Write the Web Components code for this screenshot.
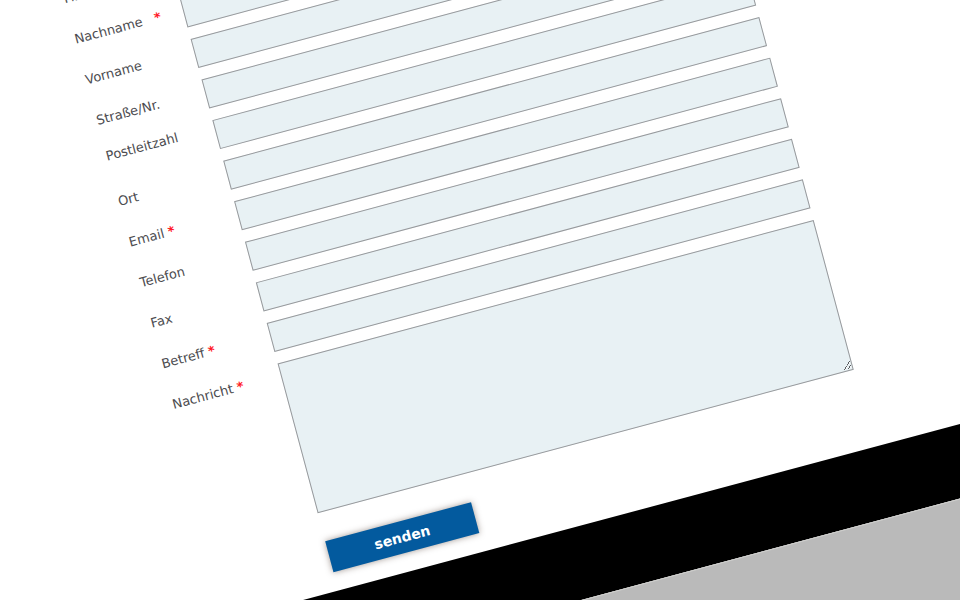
<!DOCTYPE html>
<html lang="de">
<head>
    <meta charset="UTF-8">
    <meta name="viewport" content="width=device-width, initial-scale=1.0">
    <title>Kontakt</title>
    <style>
        body {
            margin: 0;
            background: white;
            color: #4c4c50;
            font-family: Verdana, "DejaVu Sans", sans-serif;
            font-size: 13px;
        }
    </style>
</head>
<body>
    <tilted-screen>
        <contact-form></contact-form>
    </tilted-screen>

    <script>
        class TiltedScreen extends HTMLElement {

            constructor() {
                super();
                this.attachShadow({ mode: "open" });
                this.shadowRoot.innerHTML = /*html*/ `
                    <style>
                        :host {
                            display: block;
                            height: 100vh;
                            overflow: hidden;
                        }
                        .device {
                            width: 120%;
                            transform: rotate(-15deg);
                            transform-origin: 0 0;
                        }
                        .screen {
                            padding: 3px 0 19px 62px;
                            background: white;
                        }
                        .bezel {
                            height: 72px;
                            background: black;
                        }
                        .stand {
                            height: 100vh;
                            border-top: 1px solid #cfcfcd;
                            background: #bababa;
                        }
                    </style>
                    <div class="device">
                        <div class="screen"><slot></slot></div>
                        <div class="bezel"></div>
                        <div class="stand"></div>
                    </div>
                `;
            }
        }

        class FormRow extends HTMLElement {

            constructor() {
                super();
                this.attachShadow({ mode: "open" });
            }

            connectedCallback() {
                const name = this.getAttribute("name");
                const required = this.hasAttribute("required") ? "required" : "";
                const control = this.hasAttribute("multiline")
                    ? `<textarea id="control" name="${name}" ${required}></textarea>`
                    : `<input id="control" type="${this.getAttribute("type") || "text"}" name="${name}" ${required}>`;

                this.shadowRoot.innerHTML = /*html*/ `
                    <style>
                        :host {
                            display: grid;
                            grid-template-columns: 112px 1fr;
                            align-items: start;
                        }
                        label {
                            line-height: 26px;
                            white-space: pre;
                        }
                        :host([compact]) label {
                            line-height: 16px;
                        }
                        .mark {
                            color: #ff1a28;
                            font-weight: bold;
                        }
                        input, textarea {
                            display: block;
                            box-sizing: border-box;
                            width: 100%;
                            height: 30px;
                            margin: 0;
                            padding: 4px 8px;
                            border: 1px solid #97999c;
                            border-radius: 0;
                            outline: none;
                            background: #e8f1f4;
                            color: inherit;
                            font: inherit;
                        }
                        textarea {
                            height: 155px;
                            resize: both;
                        }
                    </style>
                    <label for="control"><slot></slot>${required ? ' <span class="mark">*</span>' : ""}</label>
                    ${control}
                `;
            }
        }

        class SendButton extends HTMLElement {

            constructor() {
                super();
                this.attachShadow({ mode: "open" });
                this.shadowRoot.innerHTML = /*html*/ `
                    <style>
                        :host {
                            display: block;
                        }
                        button {
                            display: block;
                            width: 151px;
                            height: 32px;
                            padding: 0;
                            border: 0;
                            background: #035a9e;
                            box-shadow: 0 0 6px rgba(70, 50, 40, 0.5);
                            color: white;
                            font-family: inherit;
                            font-size: 14px;
                            font-weight: bold;
                            cursor: pointer;
                        }
                    </style>
                    <button type="button"><slot></slot></button>
                `;
            }
        }

        class ContactForm extends HTMLElement {

            constructor() {
                super();
                this.attachShadow({ mode: "open" });
                this.shadowRoot.innerHTML = /*html*/ `
                    <style>
                        :host {
                            display: block;
                            max-width: 667px;
                        }
                        form {
                            display: grid;
                            gap: 12px;
                        }
                        send-button {
                            margin: 17px 0 0 112px;
                        }
                    </style>
                    <form>
                        <form-row name="firma">Firma</form-row>
                        <form-row name="nachname" required>Nachname&nbsp;&nbsp;</form-row>
                        <form-row name="vorname">Vorname</form-row>
                        <form-row name="strasse">Straße/Nr.</form-row>
                        <form-row name="plz" compact>Postleitzahl</form-row>
                        <form-row name="ort">Ort</form-row>
                        <form-row name="email" type="email" required>Email</form-row>
                        <form-row name="telefon" type="tel">Telefon</form-row>
                        <form-row name="fax" type="tel">Fax</form-row>
                        <form-row name="betreff" required>Betreff</form-row>
                        <form-row name="nachricht" multiline required>Nachricht</form-row>
                        <send-button>senden</send-button>
                    </form>
                `;
            }
        }

        customElements.define("tilted-screen", TiltedScreen);
        customElements.define("form-row", FormRow);
        customElements.define("send-button", SendButton);
        customElements.define("contact-form", ContactForm);
    </script>
</body>
</html>
